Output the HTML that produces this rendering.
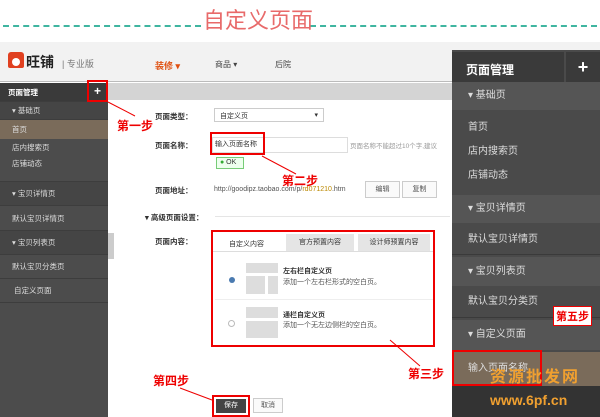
<!DOCTYPE html>
<html><head><meta charset="utf-8"><style>
*{margin:0;padding:0;box-sizing:border-box}
body{width:600px;height:417px;overflow:hidden;position:relative;background:#fff;font-family:"Liberation Sans","Noto Sans CJK SC",sans-serif;font-size:8px;color:#333}
.a{position:absolute}
.dash{border-top:2px dashed #3fb5a0;height:0}
.side div{position:absolute;left:0;width:108px;color:#ddd;font-size:7.5px;padding-left:12px;border-bottom:1px solid #3d3d3d}
.rp div.i{position:absolute;left:0;width:148px;color:#ddd;font-size:10px;padding-left:16px}
.red{border:2px solid #e00}
.step{color:#e00;font-weight:bold;font-size:12px;white-space:nowrap}
.lbl{font-size:7.5px;font-weight:bold;color:#333}
.btn{border:1px solid #ccc;background:#fafafa;font-size:7px;text-align:center;color:#555}
</style></head><body>
<div class="a dash" style="left:3px;top:25px;width:198px"></div>
<div class="a dash" style="left:310px;top:25px;width:287px"></div>
<div class="a" style="left:203px;top:6px;font-size:22px;color:#e86a6a;line-height:30px">自定义页面</div>

<div class="a" style="left:0;top:42px;width:600px;height:40px;background:#f2f2f2;border-bottom:1px solid #bbb"></div>
<div class="a" style="left:8px;top:52px;width:16px;height:16px;background:#e04020;border-radius:3px 3px 2px 2px"></div>
<div class="a" style="left:12px;top:58px;width:8px;height:8px;background:#fff;border-radius:50%"></div>
<div class="a" style="left:26px;top:52px;font-size:14px;font-weight:bold;color:#222">旺铺</div>
<div class="a" style="left:62px;top:57px;font-size:9px;color:#777">| 专业版</div>
<div class="a" style="left:155px;top:59px;font-size:9px;font-weight:bold;color:#e05010">装修 ▾</div>
<div class="a" style="left:215px;top:59px;font-size:8px;color:#444">商品 ▾</div>
<div class="a" style="left:275px;top:59px;font-size:8px;color:#444">后院</div>

<div class="a" style="left:108px;top:83px;width:344px;height:17px;background:#d4d4d4"></div>
<div class="a side" style="left:0;top:83px;width:108px;height:334px;background:#4c4c4c">
<div style="top:0;height:19px;background:#3a3a3a;font-weight:bold;color:#fff;padding-left:8px;line-height:19px">页面管理</div>
<div style="top:19px;height:18px;line-height:18px;background:#454545">▾ 基础页</div>
<div style="top:37px;height:19px;line-height:19px;background:#7a6b5a;border:none">首页</div>
<div style="top:56px;height:17px;line-height:17px;border:none">店内搜索页</div>
<div style="top:73px;height:26px;line-height:16px">店铺动态</div>
<div style="top:99px;height:24px;line-height:24px;background:#454545">▾ 宝贝详情页</div>
<div style="top:123px;height:25px;line-height:25px">默认宝贝详情页</div>
<div style="top:148px;height:24px;line-height:24px;background:#454545">▾ 宝贝列表页</div>
<div style="top:172px;height:24px;line-height:24px">默认宝贝分类页</div>
<div style="top:196px;height:24px;line-height:24px;padding-left:14px">自定义页面</div>
</div>
<div class="a" style="left:108px;top:233px;width:6px;height:26px;background:#ccc"></div>
<div class="a red" style="left:87px;top:80px;width:21px;height:22px;color:#fff;font-size:12px;text-align:center;line-height:18px;font-weight:bold">+</div>
<div class="a step" style="left:117px;top:117px">第一步</div>
<svg class="a" style="left:0;top:0" width="600" height="417"><g stroke="#e00" stroke-width="1" fill="none">
<line x1="108" y1="102" x2="135" y2="116"/>
<line x1="262" y1="156" x2="296" y2="174"/>
<line x1="390" y1="340" x2="420" y2="366"/>
<line x1="180" y1="388" x2="212" y2="400"/>
<line x1="565" y1="325" x2="540" y2="352"/>
</g></svg>

<div class="a lbl" style="left:155px;top:111px">页面类型：</div>
<div class="a" style="left:214px;top:108px;width:110px;height:14px;border:1px solid #ccc;font-size:7px;padding:2px 5px">自定义页<span style="float:right">▾</span></div>
<div class="a lbl" style="left:155px;top:140px">页面名称：</div>
<div class="a" style="left:212px;top:137px;width:136px;height:16px;border:1px solid #ddd"></div>
<div class="a red" style="left:210px;top:132px;width:55px;height:23px;font-size:7px;padding:5px 3px;white-space:nowrap">输入页面名称</div>
<div class="a" style="left:350px;top:140px;font-size:6.5px;color:#999;white-space:nowrap">页面名称不能超过10个字,建议</div>
<div class="a" style="left:216px;top:157px;width:28px;height:12px;border:1px solid #7c7;background:#efe;font-size:7px;padding-left:3px;line-height:10px"><span style="color:#3a3">●</span> OK</div>
<div class="a step" style="left:282px;top:172px">第二步</div>
<div class="a lbl" style="left:155px;top:185px">页面地址：</div>
<div class="a" style="left:214px;top:186px;font-size:7px;color:#555">http://goodipz.taobao.com/p/<span style="color:#b80">rd071210</span>.htm</div>
<div class="a btn" style="left:365px;top:181px;width:35px;height:17px;line-height:15px">编辑</div>
<div class="a btn" style="left:402px;top:181px;width:35px;height:17px;line-height:15px">复制</div>
<div class="a lbl" style="left:145px;top:212px">▾ 高级页面设置：</div>
<div class="a" style="left:215px;top:216px;width:235px;border-top:1px solid #e5e5e5"></div>
<div class="a lbl" style="left:155px;top:236px">页面内容：</div>
<div class="a red" style="left:211px;top:230px;width:224px;height:117px"></div>
<div class="a" style="left:286px;top:234px;width:68px;height:17px;background:#e5e5e5;font-size:7px;text-align:center;line-height:17px">官方预置内容</div>
<div class="a" style="left:358px;top:234px;width:72px;height:17px;background:#e5e5e5;font-size:7px;text-align:center;line-height:17px">设计师预置内容</div>
<div class="a" style="left:229px;top:239px;font-size:7px">自定义内容</div>
<div class="a" style="left:213px;top:251px;width:220px;border-top:1px solid #ddd"></div>
<div class="a" style="left:229px;top:277px;width:6px;height:6px;border-radius:50%;background:#4a7ab0"></div>
<div class="a" style="left:246px;top:263px;width:32px;height:10px;background:#ddd"></div>
<div class="a" style="left:246px;top:276px;width:19px;height:18px;background:#ddd"></div>
<div class="a" style="left:268px;top:276px;width:10px;height:18px;background:#ddd"></div>
<div class="a" style="left:283px;top:266px;font-size:7px;font-weight:bold">左右栏自定义页</div>
<div class="a" style="left:283px;top:277px;font-size:7px;color:#555">添加一个左右栏形式的空白页。</div>
<div class="a" style="left:215px;top:299px;width:218px;border-top:1px solid #eee"></div>
<div class="a" style="left:228px;top:320px;width:7px;height:7px;border-radius:50%;border:1px solid #bbb"></div>
<div class="a" style="left:246px;top:307px;width:32px;height:11px;background:#ddd"></div>
<div class="a" style="left:246px;top:321px;width:32px;height:17px;background:#ddd"></div>
<div class="a" style="left:283px;top:310px;font-size:7px;font-weight:bold">通栏自定义页</div>
<div class="a" style="left:283px;top:320px;font-size:7px;color:#555">添加一个无左边侧栏的空白页。</div>
<div class="a step" style="left:408px;top:365px">第三步</div>
<div class="a step" style="left:153px;top:372px">第四步</div>
<div class="a red" style="left:212px;top:395px;width:38px;height:22px;padding:2px"><div style="background:#444;color:#fff;height:14px;font-size:7px;text-align:center;line-height:14px">保存</div></div>
<div class="a btn" style="left:253px;top:398px;width:30px;height:15px;line-height:13px">取消</div>

<div class="a rp" style="left:452px;top:50px;width:148px;height:367px;background:#4a4a4a">
<div class="a" style="left:0;top:2px;width:112px;height:30px;background:#3a3a3a;color:#fff;font-size:12px;font-weight:bold;padding:9px 14px">页面管理</div>
<div class="a" style="left:114px;top:2px;width:34px;height:30px;background:#3a3a3a;color:#fff;font-size:18px;font-weight:bold;text-align:center;line-height:30px">+</div>
<div class="i" style="top:32px;height:28px;line-height:28px;background:#555">▾ 基础页</div>
<div class="i" style="top:68px;line-height:20px">首页</div>
<div class="i" style="top:92px;line-height:20px">店内搜索页</div>
<div class="i" style="top:116px;line-height:20px">店铺动态</div>
<div class="i" style="top:145px;height:28px;line-height:28px;background:#555">▾ 宝贝详情页</div>
<div class="i" style="top:175px;height:30px;line-height:30px;border-bottom:1px solid #3a3a3a">默认宝贝详情页</div>
<div class="i" style="top:207px;height:29px;line-height:29px;background:#555">▾ 宝贝列表页</div>
<div class="i" style="top:236px;height:32px;line-height:32px;border-bottom:1px solid #3a3a3a">默认宝贝分类页</div>
<div class="i" style="top:270px;height:30px;line-height:30px;background:#555">▾ 自定义页面</div>
<div class="i" style="top:302px;height:34px;line-height:34px;background:#7a6b5a">输入页面名称</div>
<div class="a" style="left:0;top:336px;width:148px;height:31px;background:#333"></div>
</div>
<div class="a red" style="left:452px;top:350px;width:90px;height:36px"></div>
<div class="a" style="left:553px;top:306px;background:#fff;color:#e00;font-weight:bold;font-size:11px;padding:1px 2px;border:1px solid #e00">第五步</div>
<div class="a" style="left:490px;top:363px;font-size:16px;font-weight:bold;color:#f0a030;letter-spacing:2px">资源批发网</div>
<div class="a" style="left:490px;top:392px;font-size:14px;font-weight:bold;color:#f0a030">www.6pf.cn</div>
</body></html>
